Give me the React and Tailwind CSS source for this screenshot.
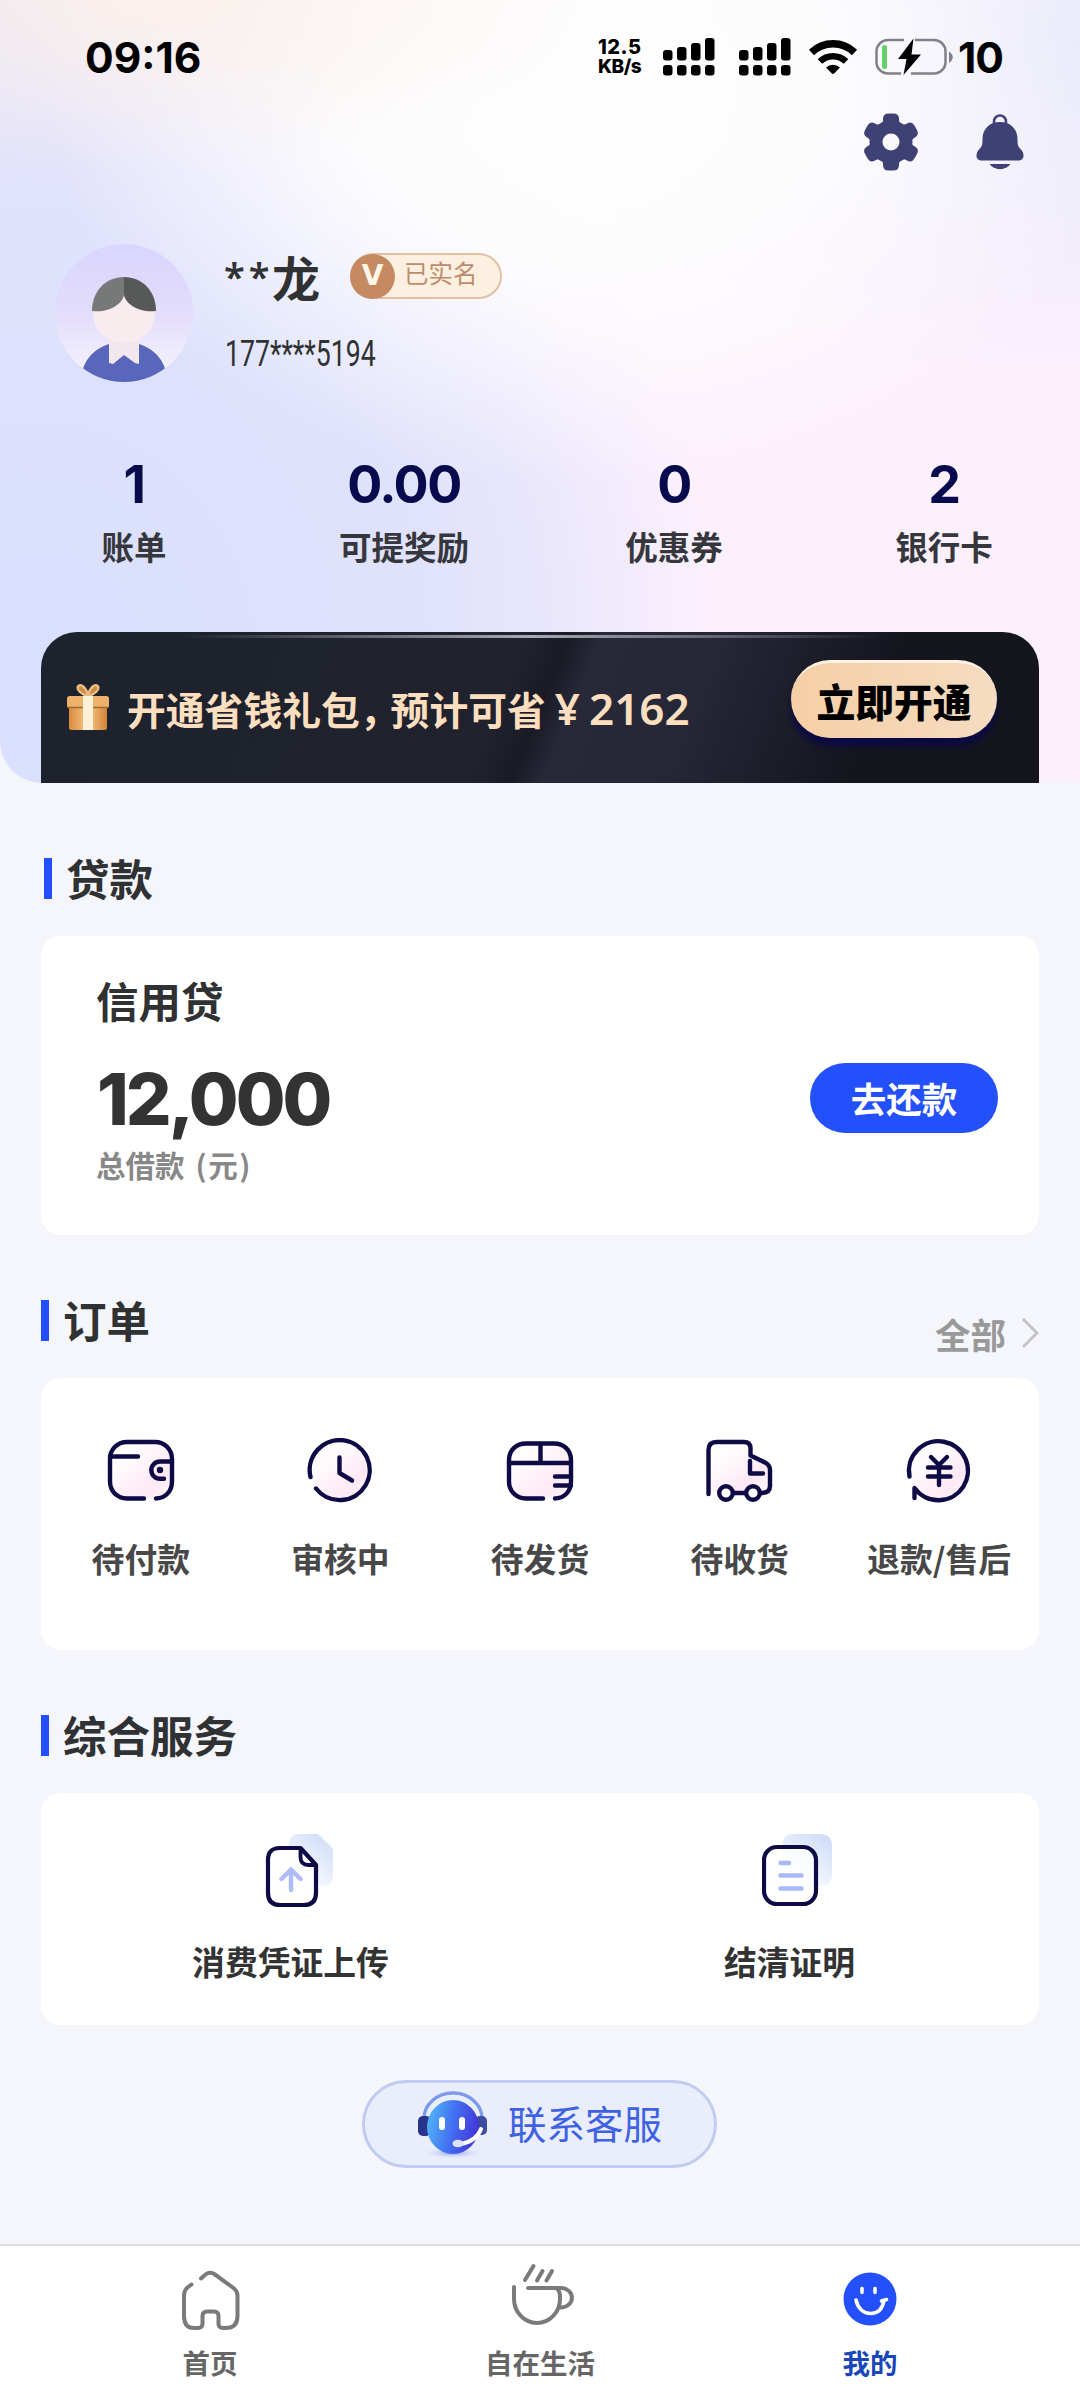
import React from 'react';
import clsx from 'clsx';

const INK = '#0d0a45';

function SignalIcon() {
  const tops = [12, 9, 5, 0];
  return (
    <svg width="52" height="38" viewBox="0 0 52 38">
      {tops.map((top, i) => (
        <g key={top}>
          <rect x={i * 14} y={top} width="9.5" height={22.5 - top} rx="3" />
          <rect x={i * 14} y="27" width="9.5" height="10.5" rx="3" />
        </g>
      ))}
    </svg>
  );
}

function WifiIcon() {
  return (
    <svg width="50" height="36" viewBox="0 0 50 36">
      <path d="M3.5 13.5a31 31 0 0 1 43 0" fill="none" stroke="#000" strokeWidth="7.5" />
      <path d="M12 22.5a18.5 18.5 0 0 1 26 0" fill="none" stroke="#000" strokeWidth="6.5" />
      <path d="M18 28.5a10 10 0 0 1 14 0l-5.600 5.800a2 2 0 0 1-2.800 0z" />
    </svg>
  );
}

function BatteryIcon() {
  return (
    <svg width="78" height="38" viewBox="0 0 78 38">
      <path d="M29 2H13A11.500 11.500 0 0 0 1.500 13.500v10A11.500 11.500 0 0 0 13 35.500h13M40 2h19a11.500 11.500 0 0 1 11.500 11.500v10A11.500 11.500 0 0 1 59 35.500H36" fill="none" stroke="#808088" strokeWidth="2.500" />
      <path d="M74 13.500c5 3 5 8.500 0 11.500z" fill="#808088" />
      <rect x="7" y="7" width="5" height="24" rx="2.500" fill="#65cf67" />
      <path d="M38.500 0.500L23 21h8.500l-3 16L46 16.500H36.500z" />
    </svg>
  );
}

function GearIcon() {
  return (
    <svg width="58" height="58" viewBox="0 0 58 58" fill="#3f4175">
      <circle cx="29" cy="29" r="15" fill="none" stroke="#3f4175" strokeWidth="13" />
      {[0, 60, 120, 180, 240, 300].map((deg) => (
        <path key={deg} d="M16.500 12.500q4.500-1.500 4.500-5.500V6q0-5.500 5.500-5.500h5Q37 .500 37 6v1q0 4 4.500 5.500l-4 5h-17z" transform={`rotate(${deg} 29 29)`} />
      ))}
    </svg>
  );
}

function BellIcon() {
  return (
    <svg width="48" height="56" viewBox="0 0 48 56" fill="#3f4175">
      <path d="M18 9.500V7.500a6 6 0 0 1 12 0v2" fill="none" stroke="#3f4175" strokeWidth="2.500" />
      <path d="M24 8C13 8 6.500 15.500 6.500 25c0 6-.500 7.500-3 10C1.500 37 .500 39 .500 41.500c0 3.500 2 5 5.500 5h36c3.500 0 5.500-1.500 5.500-5 0-2.500-1-4.500-3-6.500-2.500-2.500-3-4-3-10C41.500 15.500 35 8 24 8z" />
      <path d="M13.500 50h21c-2.500 3.300-6 5.200-10.500 5.200S16 53.300 13.500 50z" />
    </svg>
  );
}

function Avatar() {
  return (
    <svg width="138" height="138" viewBox="0 0 138 138">
      <defs>
        <linearGradient id="avatarBg" x1="0" y1="0" x2="0" y2="1">
          <stop offset="0" stopColor="#d9d5fd" />
          <stop offset=".5" stopColor="#e3dcfb" />
          <stop offset="1" stopColor="#f8f6ff" />
        </linearGradient>
        <clipPath id="avatarClip"><circle cx="69" cy="69" r="69" /></clipPath>
      </defs>
      <g clipPath="url(#avatarClip)">
        <rect width="138" height="138" fill="url(#avatarBg)" />
        <path d="M26 138c0-20 12-33 28-38h30c16 5 28 18 28 38z" fill="#5867bb" />
        <path d="M54 90h30v30l-4-1-11-8-11 9-4-1z" fill="#f1e8ee" />
        <ellipse cx="69" cy="70" rx="31" ry="29" fill="#f8ecef" />
      </g>
      <path d="M69 33C51 33 37 47 37 67c16 2 30-6 32-16z" fill="#777979" />
      <path d="M69 33c18 0 32 14 32 34-16 2-30-6-32-16z" fill="#575958" />
    </svg>
  );
}

function GiftIcon() {
  return (
    <svg width="42" height="47" viewBox="0 0 42 47">
      <defs>
        <linearGradient id="giftBox" x1="0" y1="0" x2="1" y2="0">
          <stop offset="0" stopColor="#d98a3c" />
          <stop offset=".5" stopColor="#f6c98a" />
          <stop offset="1" stopColor="#d28438" />
        </linearGradient>
      </defs>
      <path d="M21 13C15 10 9 6 11 2.500 13.500-1 19 3 21 12c2-9 7.500-13 10-9.500C33 6 27 10 21 13z" fill="#c98a45" stroke="#e9bd82" strokeWidth="2.500" />
      <rect x="2" y="22" width="38" height="24" rx="2.500" fill="url(#giftBox)" />
      <rect x="0" y="12" width="42" height="12" rx="2.500" fill="#edb36c" />
      <path d="M1 23.500h40" stroke="#a86528" strokeWidth="1.500" />
      <rect x="16" y="12" width="10" height="34" fill="#fff0d8" />
    </svg>
  );
}

// the five order icons share one 72x66 canvas, one pink glow and one stroke
function OrderIcon({ type }) {
  return (
    <svg width="72" height="66" viewBox="0 0 72 66" fill="none" stroke={INK} strokeWidth="4.400" strokeLinecap="round" strokeLinejoin="round">
      <defs>
        <linearGradient id={`glow-${type}`} x1=".15" y1=".1" x2=".9" y2=".9">
          <stop offset="0" stopColor="#fff" />
          <stop offset=".3" stopColor="#fff9fc" />
          <stop offset=".75" stopColor="#ffe9f4" />
          <stop offset="1" stopColor="#fff3f9" />
        </linearGradient>
      </defs>
      {type === 'pay' && (
        <>
          <rect x="4" y="4" width="64" height="57" rx="18" fill="url(#glow-pay)" stroke="none" />
          <path d="M39 60.500H22c-10 0-17-7.500-17-17V21C5 11.500 12 4 22 4h28c10 0 17 7.500 17 17v22.500c0 9.500-6 16.500-16 17" />
          <path d="M5 18.500h28M67 23.500H55a8.500 8.500 0 0 0 0 17.300h4" />
          <circle cx="55" cy="32" r="3.200" fill={INK} stroke="none" />
        </>
      )}
      {type === 'review' && (
        <>
          <circle cx="36" cy="33" r="30" fill="url(#glow-review)" stroke="none" />
          <path d="M6.500 39A30 30 0 1 1 12 50.500" />
          <path d="M35.500 19.500V35l12.500 7.500" />
        </>
      )}
      {type === 'ship' && (
        <>
          <rect x="4" y="5" width="64" height="56" rx="18" fill="url(#glow-ship)" stroke="none" />
          <path d="M39 60.500H22c-10 0-17-7.500-17-17V22C5 12.500 12 5.500 22 5.500h28c10 0 17 7 17 16.500v21.500c0 9.500-6 16.500-16 17" />
          <path d="M5 25h62M36.500 6v19M51 38.500h16M51 47.500h16" />
        </>
      )}
      {type === 'receive' && (
        <>
          <path d="M5 55V12q0-8 8-8h25q7 0 7 7v7l16 8q5 2.500 5 8v20H5z" fill="url(#glow-receive)" stroke="none" />
          <path d="M4.500 56V12q0-8 8-8H40q6.500 0 6.500 6.500v7L61 24.500q5 2.500 5 7.500v16q0 7-9 7M29 55h13" />
          <path d="M46 23v12.500h13" />
          <circle cx="22" cy="55" r="6.800" fill="#fff" />
          <circle cx="49" cy="55" r="6.800" fill="#fff" />
        </>
      )}
      {type === 'refund' && (
        <>
          <circle cx="36" cy="33" r="30" fill="url(#glow-refund)" stroke="none" />
          <path d="M6.500 38.500A29.500 29.500 0 1 1 11.500 50v10" />
          <path d="M28 19l8 8 8-8M25 29.500h22.500M25 38.500h22.500M36 27v20" />
        </>
      )}
    </svg>
  );
}

function UploadDocIcon() {
  return (
    <svg width="68" height="74" viewBox="0 0 68 74" fill="none">
      <defs>
        <linearGradient id="sheetA" x1="1" y1="0" x2=".3" y2="1">
          <stop offset="0" stopColor="#cbd9f8" />
          <stop offset="1" stopColor="#fff" />
        </linearGradient>
      </defs>
      <path d="M24 10q0-10 10-10h19l15 15v26q0 11-11 11H24z" fill="url(#sheetA)" />
      <path d="M35.500 14H15Q3 14 3 26v33q0 12 12 12h24q12 0 12-12V31z" fill="#fff" stroke={INK} strokeWidth="4.200" strokeLinejoin="round" />
      <path d="M35.500 14v9q0 8 8 8H51" stroke={INK} strokeWidth="3.800" strokeLinejoin="round" />
      <path d="M26 56V36M16.500 45L26 35.500 35.500 45" stroke="#adbdf8" strokeWidth="4.500" strokeLinecap="round" strokeLinejoin="round" />
    </svg>
  );
}

function CertificateIcon() {
  return (
    <svg width="70" height="74" viewBox="0 0 70 74" fill="none">
      <defs>
        <linearGradient id="sheetB" x1="1" y1="0" x2=".3" y2="1">
          <stop offset="0" stopColor="#cbd9f8" />
          <stop offset="1" stopColor="#fff" />
        </linearGradient>
      </defs>
      <path d="M20 12Q20 0 32 0h26q12 0 12 12v28q0 12-12 12H20z" fill="url(#sheetB)" />
      <rect x="2" y="13" width="52" height="57" rx="13" fill="#fff" fillOpacity=".75" stroke={INK} strokeWidth="4.200" />
      <path d="M18.500 29H27M18.500 41.500h21M18.500 54.500h21" stroke="#a9b9f6" strokeWidth="4.500" strokeLinecap="round" />
    </svg>
  );
}

function RobotIcon() {
  return (
    <svg width="72" height="68" viewBox="0 0 72 68" fill="none">
      <defs>
        <linearGradient id="robotFace" x1="0" y1=".3" x2="1" y2=".5">
          <stop offset="0" stopColor="#52b4f6" />
          <stop offset=".5" stopColor="#4270f2" />
          <stop offset="1" stopColor="#4434d6" />
        </linearGradient>
        <radialGradient id="robotShadow">
          <stop offset="0" stopColor="#8f9df0" />
          <stop offset="1" stopColor="#e9edfd" stopOpacity="0" />
        </radialGradient>
      </defs>
      <ellipse cx="36" cy="62" rx="32" ry="6" fill="url(#robotShadow)" />
      <path d="M7 28a29 26 0 0 1 58 0" stroke="#7d9bea" strokeWidth="3.500" />
      <path d="M10 28a26 23 0 0 1 52 0" stroke="#e8efff" strokeWidth="2.500" />
      <rect x="1" y="25" width="13" height="20" rx="5" fill="#29348c" />
      <rect x="58" y="25" width="12" height="19" rx="5" fill="#3d4c9e" />
      <ellipse cx="36" cy="36" rx="26" ry="27" fill="url(#robotFace)" />
      <rect x="22" y="26" width="6" height="13" rx="3" fill="#fff" />
      <rect x="42" y="26" width="6" height="13" rx="3" fill="#fff" />
      <path d="M64 38c-3 8-10 13-20 15" stroke="#fff" strokeWidth="4" strokeLinecap="round" />
      <ellipse cx="41" cy="52.500" rx="5.500" ry="3.800" fill="#dfe3ff" />
    </svg>
  );
}

function HomeIcon() {
  return (
    <svg width="60" height="64" viewBox="0 0 60 64" fill="none" stroke="#7a7a7a" strokeWidth="4" strokeLinecap="round" strokeLinejoin="round">
      <path d="M21 11.500l4.500-4q4.500-3.500 9.500 0L53.500 21q4 3 4 7.500V49q0 12-12 12H43q-4.500 0-4.500-4.500V49q0-4.500-4.500-4.500h-7q-4.500 0-4.500 4.500v7.500q0 4.500-4.500 4.500h-4q-10 0-10-12V29q0-5.500 3.500-8.500l4-3" />
    </svg>
  );
}

function CupIcon() {
  return (
    <svg className="overflow-visible" width="66" height="64" viewBox="0 0 66 64" fill="none" stroke="#7a7a7a" strokeWidth="4" strokeLinecap="round" strokeLinejoin="round">
      <path d="M7 20v12a23 24 0 0 0 46 0v-3q0-5-4-8" />
      <path d="M21 21h34a11 9.800 0 0 1 0 19.500h-2" />
      <path d="M26.500-1L18 13M35.500 4L30 13.500M45 4L39.500 13.500" />
    </svg>
  );
}

function SmileIcon() {
  return (
    <svg width="54" height="54" viewBox="0 0 54 54" fill="none" stroke="#fff" strokeWidth="3.600" strokeLinecap="round">
      <circle cx="27" cy="27" r="26.500" fill="#2450fb" stroke="none" />
      <path d="M19 16.500v4M32 16.500v4M13 28c2 8.500 7.500 13.500 14.500 13.500S39.500 37 41 28.500M38.500 29l5-1.500" />
    </svg>
  );
}

const stats = [
  { value: '1', label: '账单' },
  { value: '0.00', label: '可提奖励' },
  { value: '0', label: '优惠券' },
  { value: '2', label: '银行卡' },
];

const orders = [
  { type: 'pay', label: '待付款' },
  { type: 'review', label: '审核中' },
  { type: 'ship', label: '待发货' },
  { type: 'receive', label: '待收货' },
  { type: 'refund', label: '退款/售后' },
];

const tabs = [
  { label: '首页', Icon: HomeIcon },
  { label: '自在生活', Icon: CupIcon },
  { label: '我的', Icon: SmileIcon, active: true },
];

function StatusBar() {
  return (
    <div className="flex h-[42px] items-center font-['Inter',sans-serif] font-bold text-black">
      <span className="ml-[85px] w-[513px] pt-[1px] text-[42.500px] leading-[42px]">09:16</span>
      <div className="flex w-[65px] flex-col text-[20px] leading-[19px] font-extrabold">
        <span className="tracking-[0.5px]">12.5</span>
        <span className="text-[19px] tracking-[-0.5px]">KB/s</span>
      </div>
      <SignalIcon />
      <div className="ml-[24px]"><SignalIcon /></div>
      <div className="ml-[17px]"><WifiIcon /></div>
      <div className="ml-[17px]"><BatteryIcon /></div>
      <span className="ml-[5px] pt-[1px] text-[42.500px] leading-[42px] tracking-[-1px]">10</span>
    </div>
  );
}

function SectionTitle({ children, className }) {
  return (
    <div className={clsx('flex h-[41px]', className)}>
      <div className="h-[41px] w-[8px] bg-[#2450fb]" />
      <h2 className="mt-[1px] ml-[14px] text-[43.500px] leading-[38px] font-bold text-[#303133]">{children}</h2>
    </div>
  );
}

export default function App() {
  return (
    <div className="flex h-[2400px] w-[1080px] flex-col overflow-hidden bg-[#f5f6fc] font-['Noto_Sans_CJK_SC',sans-serif]">
      <header className="flex h-[783px] shrink-0 flex-col rounded-bl-[42px] bg-[#fcf0fd] bg-[radial-gradient(42%_22%_at_14%_0%,#fbf1ec_0%,#fbf3f000_100%),radial-gradient(50%_52%_at_54%_10%,#fefefe_0%,#fefefee6_45%,#fefefe00_100%),radial-gradient(50%_42%_at_100%_6%,#e8e9fa_0%,#ebebfaB0_50%,#fcf0fd00_100%),radial-gradient(62%_95%_at_4%_84%,#d9dffe_0%,#dfe2fc_55%,#e4e4fcd0_75%,#fcf0fd00_100%),linear-gradient(90deg,#e4e1f2_0%,#fcf0fd_50%)] pt-[36px]">
        <StatusBar />
        <div className="mt-[35px] flex h-[58px] items-center justify-end pr-[56px]">
          <GearIcon />
          <div className="ml-[56px]"><BellIcon /></div>
        </div>

        <div className="mt-[73px] flex h-[138px] pl-[55px]">
          <Avatar />
          <div className="ml-[31px]">
            <div className="mt-[9px] flex h-[46px] items-center text-[#303133]">
              <span className="w-[48px] font-['Noto_Sans',sans-serif] text-[38px] leading-[46px] font-semibold tracking-[4px]">**</span>
              <span className="w-[78px] text-[48px] leading-[42px] font-bold">龙</span>
              <div className="flex h-[46px] w-[152px] items-center rounded-full border-2 border-[#e2c0a4] bg-[#fdf0e1]">
                <span className="-ml-[2px] flex size-[45px] items-center justify-center rounded-full bg-[#c68a63] font-['DejaVu_Sans',sans-serif] text-[28px] font-bold text-[#fff6ea]">V</span>
                <span className="-mt-[6px] ml-[9px] text-[24.500px] leading-[40px] text-[#bd8c6b]">已实名</span>
              </div>
            </div>
            <p className="mt-[33px] ml-[1px] w-[200px] origin-left scale-x-[0.74] font-['Roboto',sans-serif] text-[36px] leading-[44px] text-[#303133]">177****5194</p>
          </div>
        </div>

        <div className="mt-[74px] -ml-[1px] grid w-[1080px] grid-cols-4 text-center">
          {stats.map((item) => (
            <div key={item.label}>
              <p className="font-['Inter',sans-serif] text-[52px] leading-[57px] font-bold tracking-[-1.500px] text-[#070a4d]">{item.value}</p>
              <p className="mt-[15px] text-[32.500px] leading-[35px] font-bold text-[#36373c]">{item.label}</p>
            </div>
          ))}
        </div>

        <div className="relative mx-[41px] mt-[69px] flex h-[151px] items-center rounded-t-[36px] bg-[linear-gradient(112deg,#1d222c_0%,#20232e_46%,#191a24_50%,#272838_53%,#252636_65%,#15151e_82%)] pl-[26px]">
          <div className="absolute top-[3px] left-[140px] h-[3px] w-[700px] bg-linear-to-r from-transparent via-[#a9abb3] to-transparent" />
          <GiftIcon />
          <p className="ml-[18px] w-[683px] text-[38.800px] leading-[44px] font-bold whitespace-nowrap text-[#fddfc0]">
            <span>开通省钱礼包，</span>
            <span className="-ml-[8px]">预计可省</span>
            <span className="ml-[9px] font-['Noto_Sans',sans-serif] text-[44px] font-semibold">¥<span className="ml-[9px]">2162</span></span>
          </p>
          <button className="-mt-[18px] -ml-[19px] h-[78px] w-[206px] rounded-full border-t-3 border-[#fff2e2] bg-linear-to-r from-[#f5cfa5] to-[#f6dcc2] text-[38.800px] leading-[69px] font-black text-black shadow-[0_8px_6px_#0b0a45]">立即开通</button>
        </div>
      </header>

      <main className="flex flex-col px-[41px]">
        <SectionTitle className="mt-[75px] pl-[3px]">贷款</SectionTitle>
        <div className="mt-[37px] flex h-[299px] justify-between rounded-[20px] bg-white pr-[41px] pl-[55px]">
          <div>
            <h3 className="mt-[40px] text-[42.500px] leading-[48px] font-bold text-[#303133]">信用贷</h3>
            <p className="mt-[38px] ml-[1px] font-['Inter',sans-serif] text-[72px] leading-[74px] font-extrabold tracking-[-3px] text-[#333]">12,000</p>
            <p className="mt-[10px] text-[29.500px] leading-[36px] font-bold text-[#888]">
              总借款<span className="ml-[11px] tracking-[1.500px]">(元)</span>
            </p>
          </div>
          <button className="mt-[127px] h-[70px] w-[188px] rounded-full bg-[#2450fb] text-[35.500px] leading-[66px] font-bold text-white">去还款</button>
        </div>

        <div className="mt-[65px] flex h-[41px] justify-between">
          <SectionTitle>订单</SectionTitle>
          <div className="mt-[15px] flex h-[36px] items-center text-[#999]">
            <span className="pt-[1px] text-[35.500px] leading-[36px] font-bold">全部</span>
            <svg className="ml-[15px]" width="18" height="32" viewBox="0 0 18 32" fill="none" stroke="#c2c2c6" strokeWidth="2.800">
              <path d="M2 2l14 14L2 30" />
            </svg>
          </div>
        </div>
        <div className="mt-[37px] grid h-[272px] grid-cols-5 rounded-[20px] bg-white pt-[60px]">
          {orders.map((item) => (
            <div key={item.type} className="flex flex-col items-center">
              <OrderIcon type={item.type} />
              <span className="mt-[36px] text-[32.800px] leading-[36px] font-bold whitespace-nowrap text-[#484848]">{item.label}</span>
            </div>
          ))}
        </div>

        <SectionTitle className="mt-[65px]">综合服务</SectionTitle>
        <div className="mt-[37px] grid h-[232px] grid-cols-2 rounded-[20px] bg-white pt-[41px] text-[32.800px] leading-[36px] font-bold text-[#333]">
          <div className="flex flex-col items-center">
            <div className="ml-[16px]"><UploadDocIcon /></div>
            <span className="mt-[35px]">消费凭证上传</span>
          </div>
          <div className="flex flex-col items-center">
            <div className="ml-[14px]"><CertificateIcon /></div>
            <span className="mt-[35px]">结清证明</span>
          </div>
        </div>

        <button className="mt-[55px] ml-[321px] flex h-[88px] w-[355px] items-center rounded-full border-3 border-[#c0cbf0] bg-[#e9edfc] pl-[52px]">
          <div className="pt-[2px]"><RobotIcon /></div>
          <span className="-mt-[5px] ml-[19px] text-[38.500px] leading-[44px] text-[#3f62e2]">联系客服</span>
        </button>
      </main>

      <nav className="mt-auto grid h-[156px] grid-cols-3 border-t-2 border-[#dcdce4] bg-white px-[45px]">
        {tabs.map(({ label, Icon, active }) => (
          <div key={label} className="flex flex-col items-center">
            <div className="mt-[20px] flex h-[66px] items-center"><Icon /></div>
            <span className={clsx('mt-[14px] text-[27.500px] leading-[32px] font-bold', active ? 'text-[#1747b8]' : 'text-[#666]')}>{label}</span>
          </div>
        ))}
      </nav>
    </div>
  );
}
